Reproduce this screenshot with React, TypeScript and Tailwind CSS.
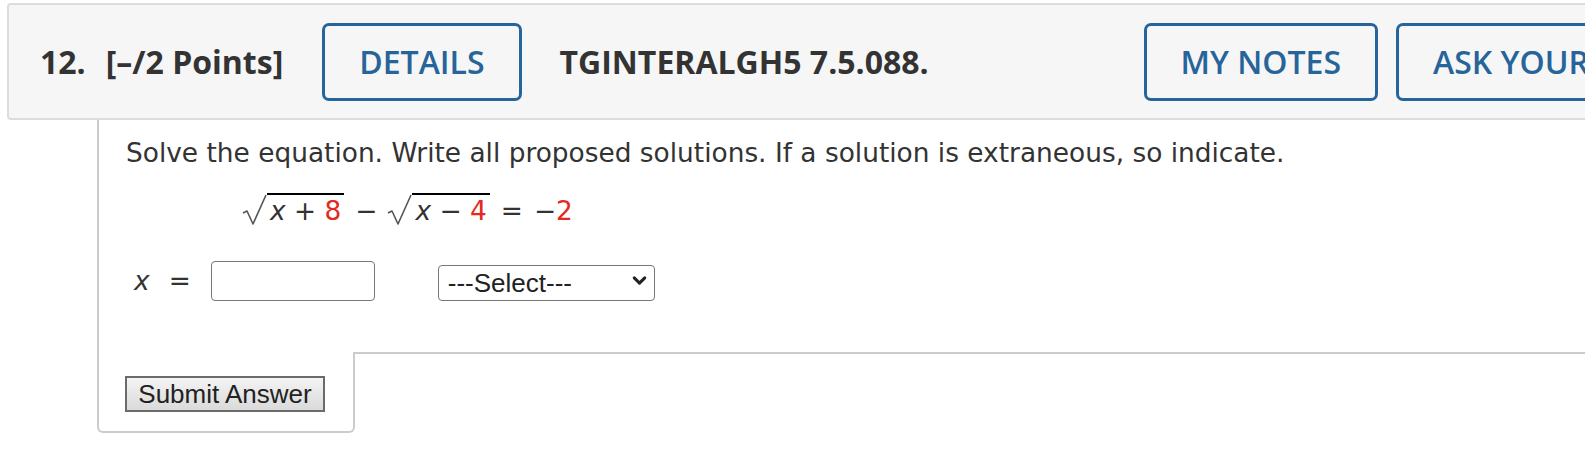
import React from 'react';
import { ChevronDown } from 'lucide-react';

const Radical = ({ children }: { children: React.ReactNode }) => (
  <span className="inline-flex items-start">
    <svg width="25" height="32" viewBox="0 0 25 32" className="mt-[1px]">
      <path d="M1 19 L5 17 L11 30 L24 1" fill="none" stroke="#555" strokeWidth="1.6" strokeLinejoin="round" />
    </svg>
    <span className="border-t-2 border-black px-[3px] leading-[30px] pt-[1px]">{children}</span>
  </span>
);

const Red = ({ children }: { children: React.ReactNode }) => (
  <span className="text-[#e5291f]">{children}</span>
);

const HeaderButton = ({ label, className = '' }: { label: string; className?: string }) => (
  <button className={`shrink-0 h-[78px] px-[34px] border-[3px] border-[#26649a] rounded-[7px] text-[32px] font-semibold text-[#26649a] whitespace-nowrap ${className}`}>
    {label}
  </button>
);

export default function App() {
  return (
    <div className="w-[1585px] h-[453px] overflow-hidden bg-white">
      {/* question header */}
      <div className="ml-[7px] mt-[3px] w-[1900px] h-[117px] bg-[#f6f6f6] border-2 border-[#dcdcdc] rounded-[4px] flex items-center pl-[31px] font-['Open_Sans',sans-serif] text-[#333] whitespace-nowrap">
        <span className="shrink-0 text-[32px] font-bold">12.</span>
        <span className="shrink-0 ml-[20px] text-[32px] font-bold">[–/2 Points]</span>
        <HeaderButton label="DETAILS" className="ml-[39px]" />
        <span className="shrink-0 ml-[38px] w-[584px] text-[32px] font-bold">TGINTERALGH5 7.5.088.</span>
        <HeaderButton label="MY NOTES" />
        <HeaderButton label="ASK YOUR TEACHER" className="ml-[18px]" />
      </div>

      {/* question body */}
      <div className="ml-[97px] border-l-2 border-[#ccc] h-[232px] pl-[27px] pt-[18px] font-['DejaVu_Sans',Verdana,sans-serif] text-[26.4px] text-[#333]">
        <p className="leading-[30px] whitespace-nowrap">
          Solve the equation. Write all proposed solutions. If a solution is extraneous, so indicate.
        </p>
        <div className="mt-[25px] ml-[116px] flex items-start leading-[30px]">
          <Radical>
            <i>x</i> + <Red>8</Red>
          </Radical>
          <span className="ml-[11px] mt-[3px]">−</span>
          <span className="ml-[10px]">
            <Radical>
              <i>x</i> − <Red>4</Red>
            </Radical>
          </span>
          <span className="ml-[11px] mt-[3px]">=</span>
          <span className="ml-[11px] mt-[3px]">
            −<Red>2</Red>
          </span>
        </div>
        <div className="mt-[29px] flex items-center">
          <i className="ml-[8px]">x</i>
          <span className="ml-[19px]">=</span>
          <input type="text" className="ml-[20px] w-[164px] h-[40px] border border-[#777] rounded-[4px] bg-white" />
          <div className="relative ml-[63px] w-[217px] h-[36px]">
            <select className="appearance-none w-full h-full border border-[#767676] rounded-[4px] bg-white pl-[9px] text-[26px] text-[#222] font-['Liberation_Sans',Arial,sans-serif] leading-none">
              <option>---Select---</option>
            </select>
            <ChevronDown className="absolute right-[5px] top-[7px] pointer-events-none text-[#222]" size={21} strokeWidth={3.5} />
          </div>
        </div>
      </div>

      {/* submit tab */}
      <div className="ml-[97px] flex">
        <div className="w-[258px] h-[81px] border-l-2 border-r-2 border-b-2 border-[#ccc] rounded-b-[6px] pl-[26px] pt-[24px]">
          <button className="w-[200px] h-[36px] border-2 border-[#6b6b6b] bg-gradient-to-b from-[#f4f4f4] to-[#dadada] text-[26px] leading-none text-[#222] font-['Liberation_Sans',Arial,sans-serif]">
            Submit Answer
          </button>
        </div>
        <div className="flex-1 border-t-2 border-[#ccc]" />
      </div>
    </div>
  );
}
